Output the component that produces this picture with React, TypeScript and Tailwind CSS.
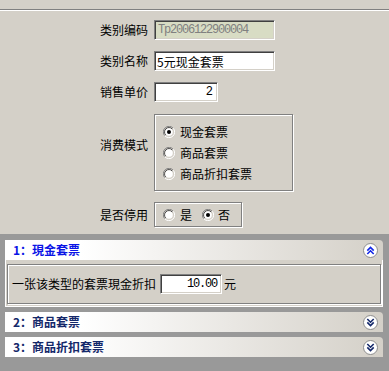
import React from 'react';

const cjk = { fontFamily: '"Noto Sans CJK SC", "Liberation Sans", sans-serif' };
const mono = { fontFamily: '"Liberation Mono", "Noto Sans CJK SC", monospace' };

// sunken win-classic text box
const sunken =
  'border border-t-[#808080] border-l-[#808080] border-b-white border-r-white shadow-[inset_1px_1px_0_#404040,inset_-1px_-1px_0_#d4d0c8]';
// etched group frame
const etched = 'border border-[#808080] shadow-[1px_1px_0_#ffffff,inset_1px_1px_0_#ffffff]';

function Radio({ checked }: { checked?: boolean }) {
  return (
    <svg width="12" height="12" viewBox="0 0 12 12" className="shrink-0">
      <circle cx="6" cy="6" r="5.5" fill="#d4d0c8" />
      <path d="M10.2 2.2 A5.5 5.5 0 0 0 1.8 9.8" fill="none" stroke="#808080" strokeWidth="1" />
      <path d="M9.2 3 A4.3 4.3 0 0 0 2.8 8.9" fill="none" stroke="#404040" strokeWidth="1" />
      <circle cx="6" cy="6" r="3.8" fill="#ffffff" />
      <path d="M1.8 9.8 A5.5 5.5 0 0 0 10.2 2.2" fill="none" stroke="#ffffff" strokeWidth="1" />
      {checked && <circle cx="6" cy="6" r="2" fill="#000000" />}
    </svg>
  );
}

function Chevron({ up, color }: { up?: boolean; color: string }) {
  const a = up ? 'M4.3 7.6 L7.5 4.4 L10.7 7.6 M4.3 11 L7.5 7.8 L10.7 11' : 'M4.3 4 L7.5 7.2 L10.7 4 M4.3 7.4 L7.5 10.6 L10.7 7.4';
  return (
    <svg width="15" height="15" viewBox="0 0 15 15" className="shrink-0">
      <circle cx="7.5" cy="7.5" r="7" fill="#ffffff" stroke="#8c8c8c" strokeWidth="1" />
      <path d={a} fill="none" stroke={color} strokeWidth="1.6" />
    </svg>
  );
}

function Row({ label, children }: { label: string; children: React.ReactNode }) {
  return (
    <div className="flex items-center">
      <div className="w-[154px] pr-[6px] text-right text-[12px] leading-[12px] text-black">{label}</div>
      {children}
    </div>
  );
}

function PanelHeader({ title, active, open }: { title: string; active?: boolean; open?: boolean }) {
  return (
    <div className="flex h-[20px] items-center justify-between rounded-tr-[4px] bg-gradient-to-r from-white from-20% to-[#d4d0c8] pl-[8px] pr-[5px]">
      <span className={`text-[12px] font-bold leading-[12px] ${active ? 'text-[#0a14e6]' : 'text-[#14286a]'}`}>{title}</span>
      <Chevron up={open} color={active ? '#1428e6' : '#14286a'} />
    </div>
  );
}

export default function App() {
  return (
    <div className="flex h-[371px] w-[389px] flex-col overflow-hidden bg-[#d4d0c8]" style={cjk}>
      <div className="mt-[9px] h-[2px] border-t border-b border-t-[#808080] border-b-white" />

      {/* form */}
      <div className="flex flex-col pt-[9px]">
        <Row label="类别编码">
          <div className={`h-[20px] w-[121px] bg-[#d8dcc4] pl-[3px] pt-[3px] text-[12px] leading-[13px] tracking-[-1.2px] text-[#808080] ${sunken}`} style={mono}>
            Tp2006122900004
          </div>
        </Row>
        <div className="h-[11px]" />
        <Row label="类别名称">
          <div className={`h-[20px] w-[121px] bg-white pl-[2px] pt-[3px] text-[12px] leading-[13px] text-black ${sunken}`}>5元现金套票</div>
        </Row>
        <div className="h-[11px]" />
        <Row label="销售单价">
          <div className={`h-[20px] w-[64px] bg-white pr-[4px] pt-[3px] text-right text-[12px] leading-[13px] text-black ${sunken}`} style={mono}>
            2
          </div>
        </Row>
        <div className="h-[12px]" />
        <div className="flex items-start">
          <div className="mt-[25px] w-[154px] pr-[6px] text-right text-[12px] leading-[12px] text-black">消费模式</div>
          <div className={`flex h-[77px] w-[139px] flex-col pl-[8px] pt-[6px] ${etched}`}>
            {[
              ['现金套票', true],
              ['商品套票', false],
              ['商品折扣套票', false],
            ].map(([t, c]) => (
              <div key={t as string} className="flex h-[21px] items-center gap-[5px] text-[12px] leading-[12px] text-black">
                <Radio checked={c as boolean} />
                <span>{t as string}</span>
              </div>
            ))}
          </div>
        </div>
        <div className="h-[11px]" />
        <Row label="是否停用">
          <div className={`flex h-[25px] w-[88px] items-center pl-[8px] text-[12px] leading-[12px] text-black ${etched}`}>
            <Radio />
            <span className="ml-[5px]">是</span>
            <span className="ml-[10px]">
              <Radio checked />
            </span>
            <span className="ml-[4px]">否</span>
          </div>
        </Row>
      </div>

      {/* accordion */}
      <div className="mt-[7px] flex flex-1 flex-col bg-[#999999] pl-[5px] pr-[6px] pt-[6px]">
        <PanelHeader title="1：現金套票" active open />
        <div className="border-x border-b border-white bg-[#d4d0c8] pb-[2px] pl-[1px] pr-[1px] pt-[4px]">
          <div className={`flex h-[40px] items-center pl-[4px] text-[12px] leading-[12px] text-black ${etched}`}>
            <span>一张该类型的套票現金折扣</span>
            <div className={`ml-[4px] h-[20px] w-[62px] bg-white pr-[4px] pt-[3px] text-right text-[12px] leading-[13px] tracking-[-1.2px] text-black ${sunken}`} style={mono}>
              10.00
            </div>
            <span className="ml-[2px]">元</span>
          </div>
        </div>
        <div className="h-[5px]" />
        <PanelHeader title="2：商品套票" />
        <div className="h-[5px]" />
        <PanelHeader title="3：商品折扣套票" />
      </div>
    </div>
  );
}
